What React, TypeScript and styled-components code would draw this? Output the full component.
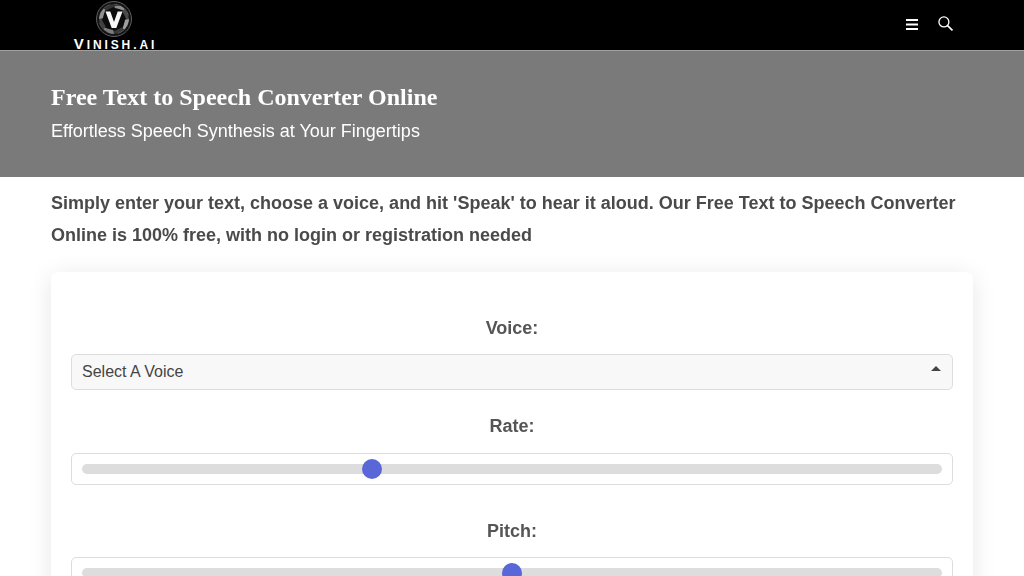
import styled, { createGlobalStyle } from 'styled-components';

const GlobalStyle = createGlobalStyle`
  html, body {
    margin: 0;
    padding: 0;
    height: 576px;
    overflow: hidden;
    background: #fff;
    font-family: 'Liberation Sans', Arial, sans-serif;
  }
  * { box-sizing: border-box; }
`;

const blades = [0, 45, 90, 135, 180, 225, 270, 315];
const bladeColors = ['#8c8c8c', '#4a4a4a', '#a0a0a0', '#3a3a3a', '#7c7c7c', '#404040', '#909090', '#343434'];

const Logo = () => (
  <LogoBox>
    <LogoMark width="36" height="36" viewBox="0 0 36 36">
      <circle cx="18" cy="18" r="17.5" fill="#141414" stroke="#5e5e5e" strokeWidth="1" />
      {blades.map((angle, i) => (
        <path
          key={angle}
          d="M18 3C25 3.5 31 8 33 15C30 10 25 7.5 19 8Z"
          fill={bladeColors[i]}
          transform={`rotate(${angle} 18 18)`}
        />
      ))}
      <circle cx="18" cy="18" r="11" fill="#0c0c0c" />
      <path d="M9.5 10.5h4.8L18 21l3.7-10.5h4.8L20.3 27h-4.6z" fill="#f6f6f6" />
    </LogoMark>
    <LogoText>
      <LogoCap>V</LogoCap>INISH.AI
    </LogoText>
  </LogoBox>
);

// same travel as a native range input: the 20px thumb stays inside the track
const Slider = ({ value }: { value: number }) => (
  <SliderBox>
    <Track>
      <Thumb style={{ left: `calc(${value} * (100% - 20px))` }} />
    </Track>
  </SliderBox>
);

export default function App() {
  return (
    <Page>
      <GlobalStyle />
      <Header>
        <Logo />
        <NavIcons>
          <svg width="12" height="12" viewBox="0 0 12 12">
            <rect y="1" width="12" height="2" fill="#fff" />
            <rect y="5.5" width="12" height="2" fill="#fff" />
            <rect y="10" width="12" height="2" fill="#fff" />
          </svg>
          <svg width="15" height="15" viewBox="0 0 16 16" fill="none" stroke="#fff">
            <circle cx="6.3" cy="6.3" r="5.3" strokeWidth="1.4" />
            <path d="M10.2 10.2L15.4 15.4" strokeWidth="1.7" />
          </svg>
        </NavIcons>
      </Header>
      <Hero>
        <Title>Free Text to Speech Converter Online</Title>
        <Subtitle>Effortless Speech Synthesis at Your Fingertips</Subtitle>
      </Hero>
      <Content>
        <Intro>
          Simply enter your text, choose a voice, and hit 'Speak' to hear it aloud. Our Free Text to Speech Converter
          Online is 100% free, with no login or registration needed
        </Intro>
        <Card>
          <VoiceLabel>Voice:</VoiceLabel>
          <SelectBox>
            Select A Voice
            <Caret />
          </SelectBox>
          <Label>Rate:</Label>
          <Slider value={1 / 3} />
          <PitchLabel>Pitch:</PitchLabel>
          <Slider value={0.5} />
        </Card>
      </Content>
    </Page>
  );
}

const Page = styled.div`
  height: 576px;
  overflow: hidden;
  will-change: opacity;
`;

const Header = styled.header`
  height: 51px;
  background: #000;
  border-bottom: 1px solid #a0a0a0;
  display: flex;
  justify-content: space-between;
  padding: 0 71px 0 72px;
`;

const LogoBox = styled.div`
  display: flex;
  flex-direction: column;
  align-items: center;
  width: 84px;
  padding-top: 1px;
`;

const LogoMark = styled.svg`
  flex-shrink: 0;
  filter: blur(0.4px);
`;

const LogoText = styled.div`
  color: #fff;
  font-size: 12px;
  line-height: 13px;
  font-weight: 700;
  letter-spacing: 2.9px;
  white-space: nowrap;
  margin-right: -3px;
`;

const LogoCap = styled.span`
  font-size: 15px;
`;

const NavIcons = styled.div`
  display: flex;
  align-items: center;
  gap: 20px;
  padding-bottom: 3px;
`;

const Hero = styled.section`
  height: 126px;
  background: #7a7a7a;
  padding: 31px 51px 0;
  color: #fff;
`;

const Title = styled.h1`
  margin: 0;
  font-family: 'Liberation Serif', 'Times New Roman', serif;
  font-size: 24px;
  line-height: 30px;
  font-weight: 700;
`;

const Subtitle = styled.p`
  margin: 6px 0 0;
  font-size: 18px;
  line-height: 26px;
`;

const Content = styled.main`
  padding: 10px 51px 0;
`;

const Intro = styled.p`
  margin: 0;
  font-size: 18px;
  line-height: 32px;
  font-weight: 700;
  color: #4a4a4a;
`;

const Card = styled.div`
  margin-top: 21px;
  padding: 20px;
  background: #fff;
  border-radius: 8px;
  box-shadow: 0 4px 24px rgba(0, 0, 0, 0.1);
`;

const Label = styled.div`
  text-align: center;
  font-size: 18px;
  line-height: 26px;
  font-weight: 700;
  color: #555;
  margin: 23px 0 14px;
`;

const VoiceLabel = styled(Label)`
  margin-bottom: 13px;
`;

const PitchLabel = styled(Label)`
  margin: 33px 0 13px;
`;

const SelectBox = styled.div`
  position: relative;
  height: 36px;
  border: 1px solid #ddd;
  border-radius: 5px;
  background: #f8f8f8;
  padding: 0 10px;
  font-size: 16px;
  line-height: 34px;
  color: #444;
`;

const Caret = styled.span`
  position: absolute;
  right: 11px;
  top: 11px;
  border-left: 5px solid transparent;
  border-right: 5px solid transparent;
  border-bottom: 5px solid #444;
`;

const SliderBox = styled.div`
  height: 32px;
  border: 1px solid #ddd;
  border-radius: 5px;
  background: #fff;
  padding: 10px;
`;

const Track = styled.div`
  position: relative;
  height: 10px;
  border-radius: 5px;
  background: #ddd;
`;

const Thumb = styled.span`
  position: absolute;
  top: -5px;
  width: 20px;
  height: 20px;
  border-radius: 50%;
  background: #5a67d8;
`;
